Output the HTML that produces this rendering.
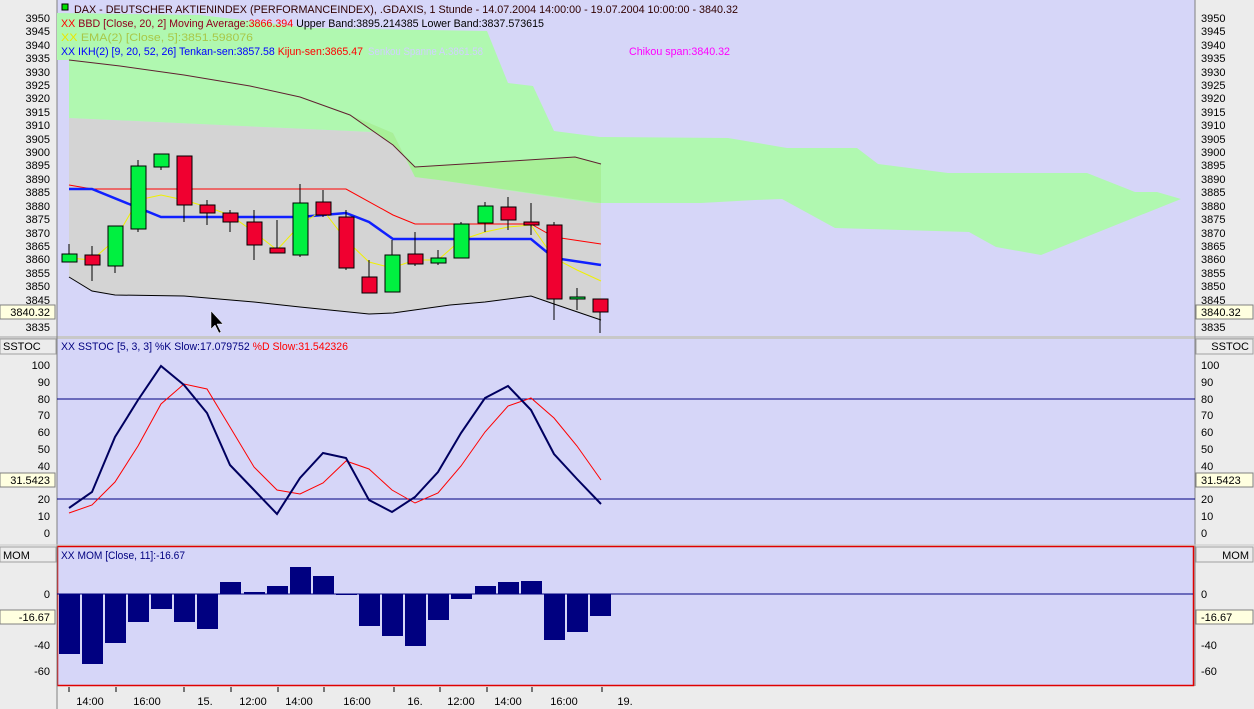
<!DOCTYPE html>
<html><head><meta charset="utf-8"><style>
html,body{margin:0;padding:0;background:#ececec;}
svg{display:block;font-family:"Liberation Sans",sans-serif;font-size:11px;}
</style></head><body>
<svg width="1254" height="709" viewBox="0 0 1254 709" xmlns="http://www.w3.org/2000/svg">
<rect x="0" y="0" width="1254" height="709" fill="#ececec"/>
<rect x="57" y="0" width="1138" height="336" fill="#d6d6f8"/>
<rect x="57" y="339" width="1138" height="206" fill="#d6d6f8"/>
<rect x="57.5" y="546.5" width="1136" height="139" fill="#d6d6f8" stroke="#e00000" stroke-width="1.5"/>
<rect x="0" y="336" width="1254" height="3" fill="#c8c8c8"/>
<line x1="57" y1="0" x2="57" y2="709" stroke="#808080"/>
<line x1="1195" y1="0" x2="1195" y2="686" stroke="#808080"/>
<line x1="0" y1="545" x2="1254" y2="545" stroke="#c8c8c8"/>

<polygon fill="#d4d4d4" points="69,118 393,133 554,138 601,138 601,320 554,304 531,296 485,302 450,305 393,313 369,314 300,307 254,302 184,296 115,295 92,291 69,277"/>
<polygon fill="#b0f8b0" points="57,13 200,15 310,28 487,31 508,83 533,86 554,131 600,137 728,138 787,148 857,148 878,164 948,173 1087,173 1135,192 1157,192 1181,199 1041,255 996,247 969,232 835,228 782,199 755,200 701,203 594,203 439,180 415,177 393,133 69,118 69,60 57,60"/>
<polygon fill="#a8f098" points="350,115 393,145 415,167 480,163 575,157 601,164 601,203 439,180 415,177 393,133"/>

<polyline fill="none" stroke="#602030" stroke-width="1" points="69,60 120,66 184,75 250,86 300,97 350,115 393,145 415,167 480,163 575,157 601,164"/>
<polyline fill="none" stroke="#000" stroke-width="1" points="69,277 92,291 115,295 184,296 254,302 300,307 369,314 393,313 450,305 485,302 531,296 554,304 601,320"/>
<polyline fill="none" stroke="#ff0000" stroke-width="1" points="69,185 92,189 346,189 393,215 415,224 531,224 554,237 601,244"/>
<polyline fill="none" stroke="#1020ff" stroke-width="2.5" points="69,189 92,189 161,217 300,217 346,213 369,222 393,239 531,239 554,258 601,265"/>
<polyline fill="none" stroke="#f0f000" stroke-width="1" points="69,258 92,260 115,240 138,200 161,195 184,200 207,207 230,215 254,232 277,250 300,225 323,210 346,240 369,262 392,268 415,260 438,260 461,240 485,232 508,227 531,225 554,258 577,270 601,281"/>

<g stroke="#000" stroke-width="1">
<line x1="69" y1="244" x2="69" y2="262"/><rect x="62" y="254" width="15" height="8" fill="#00f040"/>
<line x1="92" y1="246" x2="92" y2="281"/><rect x="85" y="255" width="15" height="10" fill="#f00030"/>
<line x1="115" y1="226" x2="115" y2="273"/><rect x="108" y="226" width="15" height="40" fill="#00f040"/>
<line x1="138" y1="160" x2="138" y2="232"/><rect x="131" y="166" width="15" height="63" fill="#00f040"/>
<line x1="161" y1="154" x2="161" y2="170"/><rect x="154" y="154" width="15" height="13" fill="#00f040"/>
<line x1="184" y1="156" x2="184" y2="222"/><rect x="177" y="156" width="15" height="49" fill="#f00030"/>
<line x1="207" y1="200" x2="207" y2="225"/><rect x="200" y="205" width="15" height="8" fill="#f00030"/>
<line x1="230" y1="210" x2="230" y2="232"/><rect x="223" y="213" width="15" height="9" fill="#f00030"/>
<line x1="254" y1="210" x2="254" y2="260"/><rect x="247" y="222" width="15" height="23" fill="#f00030"/>
<line x1="277" y1="220" x2="277" y2="253"/><rect x="270" y="248" width="15" height="5" fill="#f00030"/>
<line x1="300" y1="184" x2="300" y2="257"/><rect x="293" y="203" width="15" height="52" fill="#00f040"/>
<line x1="323" y1="190" x2="323" y2="217"/><rect x="316" y="202" width="15" height="13" fill="#f00030"/>
<line x1="346" y1="210" x2="346" y2="270"/><rect x="339" y="217" width="15" height="51" fill="#f00030"/>
<line x1="369" y1="260" x2="369" y2="293"/><rect x="362" y="277" width="15" height="16" fill="#f00030"/>
<line x1="392" y1="240" x2="392" y2="292"/><rect x="385" y="255" width="15" height="37" fill="#00f040"/>
<line x1="415" y1="232" x2="415" y2="266"/><rect x="408" y="254" width="15" height="10" fill="#f00030"/>
<line x1="438" y1="250" x2="438" y2="265"/><rect x="431" y="258" width="15" height="5" fill="#00f040"/>
<line x1="461" y1="222" x2="461" y2="258"/><rect x="454" y="224" width="15" height="34" fill="#00f040"/>
<line x1="485" y1="202" x2="485" y2="232"/><rect x="478" y="206" width="15" height="17" fill="#00f040"/>
<line x1="508" y1="197" x2="508" y2="230"/><rect x="501" y="207" width="15" height="13" fill="#f00030"/>
<line x1="531" y1="203" x2="531" y2="235"/><rect x="524" y="222" width="15" height="3" fill="#f00030"/>
<line x1="554" y1="222" x2="554" y2="320"/><rect x="547" y="225" width="15" height="74" fill="#f00030"/>
<line x1="577" y1="288" x2="577" y2="310"/><rect x="570" y="297" width="15" height="2" fill="#00f040"/>
<line x1="600" y1="299" x2="600" y2="333"/><rect x="593" y="299" width="15" height="13" fill="#f00030"/>
</g>
<path d="M211,311 L211,329 L215,325 L219,333 L221,332 L217,324 L223,324 Z" fill="#000" stroke="#fff" stroke-width="0.5"/>

<rect x="62" y="4" width="6" height="6" fill="#00e000" stroke="#000"/>
<text x="74" y="13" fill="#300000" textLength="664" lengthAdjust="spacingAndGlyphs">DAX  - DEUTSCHER AKTIENINDEX (PERFORMANCEINDEX), .GDAXIS, 1 Stunde - 14.07.2004 14:00:00 - 19.07.2004 10:00:00 - 3840.32</text>
<text x="61" y="27" textLength="483" lengthAdjust="spacingAndGlyphs"><tspan fill="#ff0000">XX</tspan><tspan fill="#900020"> BBD [Close, 20, 2] Moving Average:</tspan><tspan fill="#ff0000">3866.394</tspan><tspan fill="#000"> Upper Band:3895.214385 Lower Band:3837.573615</tspan></text>
<text x="61" y="41" textLength="192" lengthAdjust="spacingAndGlyphs"><tspan fill="#e8e800">XX</tspan><tspan fill="#a8c848"> EMA(2) [Close, 5]:3851.598076</tspan></text>
<text x="61" y="55" textLength="302" lengthAdjust="spacingAndGlyphs"><tspan fill="#0000ff">XX IKH(2) [9, 20, 52, 26] Tenkan-sen:3857.58 </tspan><tspan fill="#ff0000">Kijun-sen:3865.47</tspan></text>
<text x="368" y="55" fill="#d0d0ff" textLength="115" lengthAdjust="spacingAndGlyphs">Senkou Spanne A:3861.58</text>
<text x="629" y="55" fill="#ff00ff" textLength="101" lengthAdjust="spacingAndGlyphs">Chikou span:3840.32</text>

<text x="61" y="350" textLength="287" lengthAdjust="spacingAndGlyphs"><tspan fill="#000080">XX SSTOC [5, 3, 3] %K Slow:17.079752 </tspan><tspan fill="#ff0000">%D Slow:31.542326</tspan></text>
<line x1="57" y1="399" x2="1195" y2="399" stroke="#000080"/>
<line x1="57" y1="499" x2="1195" y2="499" stroke="#000080"/>
<polyline fill="none" stroke="#ff0000" stroke-width="1" points="69,513 92,505 115,482 138,446 161,404 184,384 207,389 230,427 254,467 277,490 300,494 323,483 346,461 369,469 392,490 415,503 438,493 461,466 485,432 508,406 531,398 554,418 577,446 601,480"/>
<polyline fill="none" stroke="#000060" stroke-width="2" points="69,508 92,492 115,437 138,400 161,366 184,385 207,413 230,465 254,490 277,514 300,478 323,453 346,458 369,500 392,512 415,497 438,472 461,433 485,398 508,386 531,410 554,454 577,479 601,504"/>

<text x="61" y="559" fill="#000080" textLength="124" lengthAdjust="spacingAndGlyphs">XX MOM [Close, 11]:-16.67</text>
<line x1="57" y1="594" x2="1193" y2="594" stroke="#000080"/>
<g fill="#000080">
<rect x="59" y="594" width="21" height="60"/><rect x="82" y="594" width="21" height="70"/><rect x="105" y="594" width="21" height="49"/><rect x="128" y="594" width="21" height="28"/><rect x="151" y="594" width="21" height="15"/><rect x="174" y="594" width="21" height="28"/><rect x="197" y="594" width="21" height="35"/><rect x="220" y="582" width="21" height="12"/><rect x="244" y="592" width="21" height="2"/><rect x="267" y="586" width="21" height="8"/><rect x="290" y="567" width="21" height="27"/><rect x="313" y="576" width="21" height="18"/><rect x="336" y="594" width="21" height="1"/><rect x="359" y="594" width="21" height="32"/><rect x="382" y="594" width="21" height="42"/><rect x="405" y="594" width="21" height="52"/><rect x="428" y="594" width="21" height="26"/><rect x="451" y="594" width="21" height="5"/><rect x="475" y="586" width="21" height="8"/><rect x="498" y="582" width="21" height="12"/><rect x="521" y="581" width="21" height="13"/><rect x="544" y="594" width="21" height="46"/><rect x="567" y="594" width="21" height="38"/><rect x="590" y="594" width="21" height="22"/>
</g>

<g fill="#000" text-anchor="end">
<text x="50" y="22">3950</text><text x="50" y="35">3945</text><text x="50" y="49">3940</text><text x="50" y="62">3935</text><text x="50" y="76">3930</text><text x="50" y="89">3925</text><text x="50" y="102">3920</text><text x="50" y="116">3915</text><text x="50" y="129">3910</text><text x="50" y="143">3905</text><text x="50" y="156">3900</text><text x="50" y="169">3895</text><text x="50" y="183">3890</text><text x="50" y="196">3885</text><text x="50" y="210">3880</text><text x="50" y="223">3875</text><text x="50" y="237">3870</text><text x="50" y="250">3865</text><text x="50" y="263">3860</text><text x="50" y="277">3855</text><text x="50" y="290">3850</text><text x="50" y="304">3845</text><text x="50" y="331">3835</text>
<text x="50" y="369">100</text><text x="50" y="386">90</text><text x="50" y="403">80</text><text x="50" y="419">70</text><text x="50" y="436">60</text><text x="50" y="453">50</text><text x="50" y="470">40</text><text x="50" y="503">20</text><text x="50" y="520">10</text><text x="50" y="537">0</text>
<text x="50" y="598">0</text><text x="50" y="649">-40</text><text x="50" y="675">-60</text>
</g>
<g fill="#000">
<text x="1201" y="22">3950</text><text x="1201" y="35">3945</text><text x="1201" y="49">3940</text><text x="1201" y="62">3935</text><text x="1201" y="76">3930</text><text x="1201" y="89">3925</text><text x="1201" y="102">3920</text><text x="1201" y="116">3915</text><text x="1201" y="129">3910</text><text x="1201" y="143">3905</text><text x="1201" y="156">3900</text><text x="1201" y="169">3895</text><text x="1201" y="183">3890</text><text x="1201" y="196">3885</text><text x="1201" y="210">3880</text><text x="1201" y="223">3875</text><text x="1201" y="237">3870</text><text x="1201" y="250">3865</text><text x="1201" y="263">3860</text><text x="1201" y="277">3855</text><text x="1201" y="290">3850</text><text x="1201" y="304">3845</text><text x="1201" y="331">3835</text>
<text x="1201" y="369">100</text><text x="1201" y="386">90</text><text x="1201" y="403">80</text><text x="1201" y="419">70</text><text x="1201" y="436">60</text><text x="1201" y="453">50</text><text x="1201" y="470">40</text><text x="1201" y="503">20</text><text x="1201" y="520">10</text><text x="1201" y="537">0</text>
<text x="1201" y="598">0</text><text x="1201" y="649">-40</text><text x="1201" y="675">-60</text>
</g>
<rect x="0" y="305" width="55" height="14" fill="#ffffe0" stroke="#808080"/><text x="50" y="316" text-anchor="end">3840.32</text>
<rect x="1196" y="305" width="57" height="14" fill="#ffffe0" stroke="#808080"/><text x="1201" y="316">3840.32</text>
<rect x="0" y="473" width="55" height="14" fill="#ffffe0" stroke="#808080"/><text x="50" y="484" text-anchor="end">31.5423</text>
<rect x="1196" y="473" width="57" height="14" fill="#ffffe0" stroke="#808080"/><text x="1201" y="484">31.5423</text>
<rect x="0" y="610" width="55" height="14" fill="#ffffe0" stroke="#808080"/><text x="50" y="621" text-anchor="end">-16.67</text>
<rect x="1196" y="610" width="57" height="14" fill="#ffffe0" stroke="#808080"/><text x="1201" y="621">-16.67</text>
<rect x="0" y="339" width="56" height="15" fill="#ececec" stroke="#a0a0a0"/><text x="3" y="350">SSTOC</text>
<rect x="1196" y="339" width="57" height="15" fill="#ececec" stroke="#a0a0a0"/><text x="1249" y="350" text-anchor="end">SSTOC</text>
<rect x="0" y="547" width="56" height="15" fill="#ececec" stroke="#a0a0a0"/><text x="3" y="559">MOM</text>
<rect x="1196" y="547" width="57" height="15" fill="#ececec" stroke="#a0a0a0"/><text x="1249" y="559" text-anchor="end">MOM</text>

<g stroke="#000"><line x1="69" y1="687" x2="69" y2="692"/><line x1="116" y1="687" x2="116" y2="692"/><line x1="184" y1="687" x2="184" y2="692"/><line x1="231" y1="687" x2="231" y2="692"/><line x1="278" y1="687" x2="278" y2="692"/><line x1="324" y1="687" x2="324" y2="692"/><line x1="394" y1="687" x2="394" y2="692"/><line x1="440" y1="687" x2="440" y2="692"/><line x1="487" y1="687" x2="487" y2="692"/><line x1="532" y1="687" x2="532" y2="692"/><line x1="602" y1="687" x2="602" y2="692"/></g>
<g text-anchor="middle" fill="#000">
<text x="90" y="705">14:00</text><text x="147" y="705">16:00</text><text x="205" y="705">15.</text><text x="253" y="705">12:00</text><text x="299" y="705">14:00</text><text x="357" y="705">16:00</text><text x="415" y="705">16.</text><text x="461" y="705">12:00</text><text x="508" y="705">14:00</text><text x="564" y="705">16:00</text><text x="625" y="705">19.</text>
</g>
</svg>
</body></html>
